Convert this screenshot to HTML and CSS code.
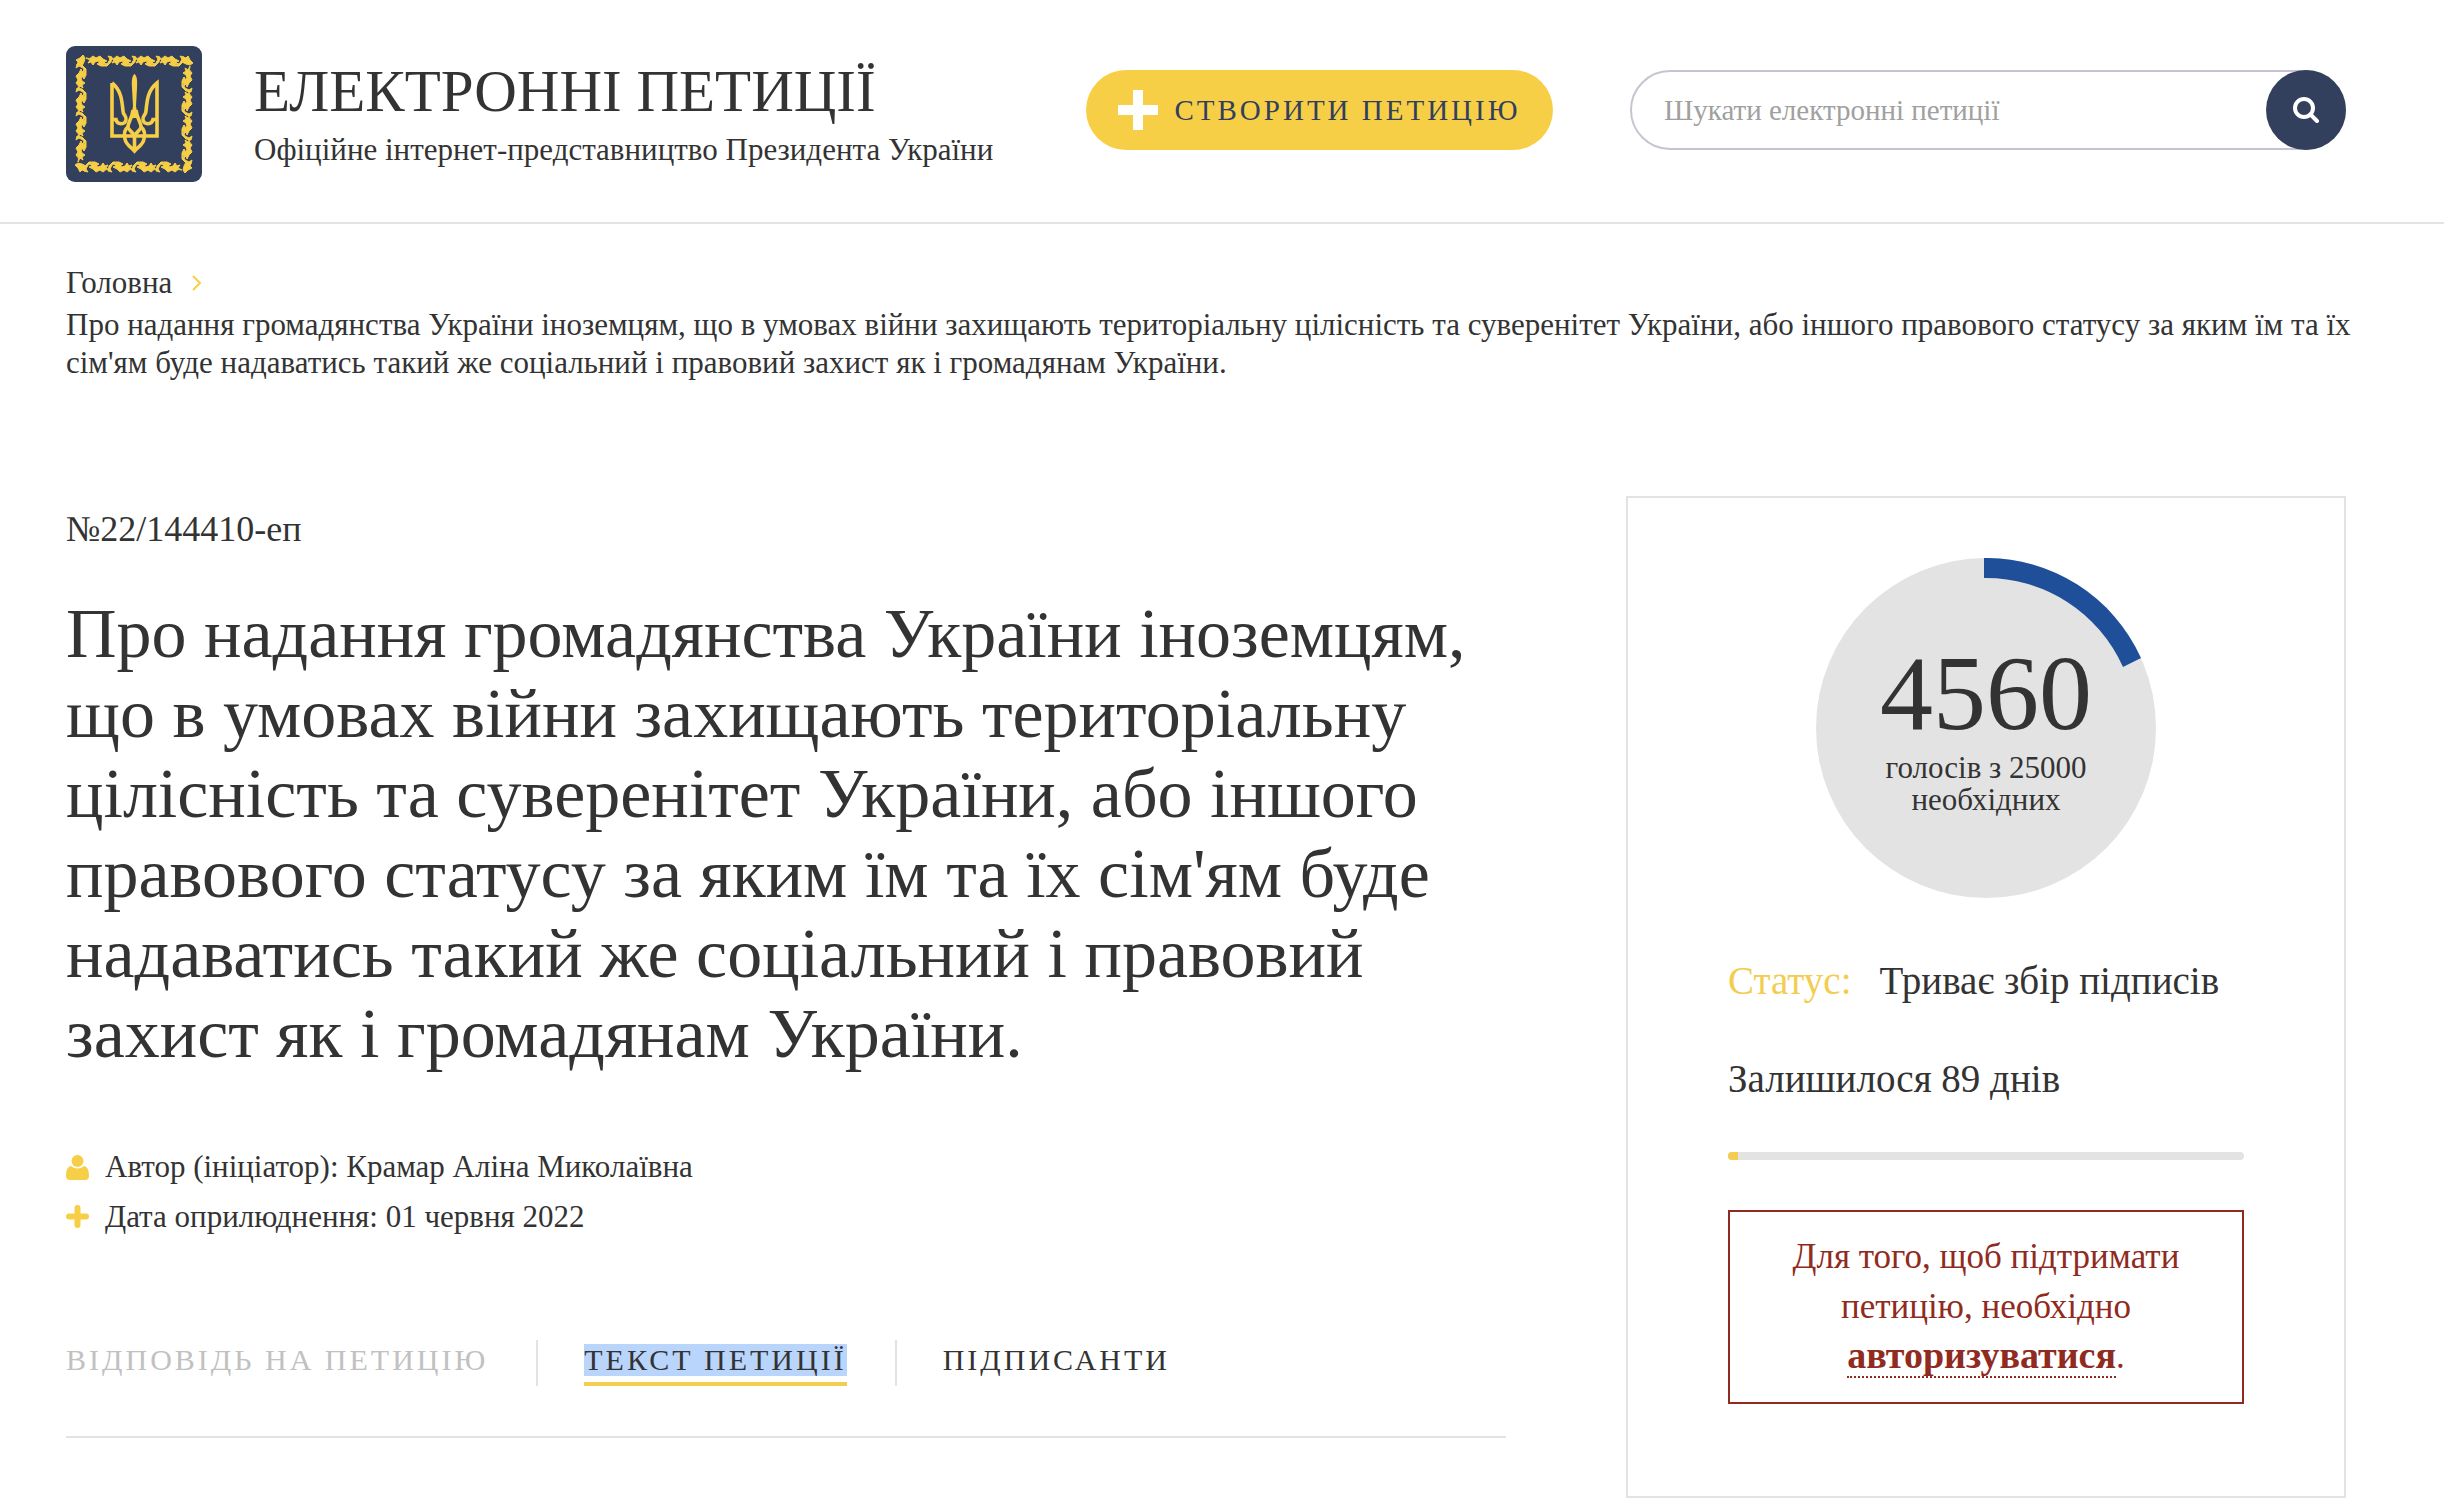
FILE: index.html
```html
<!DOCTYPE html>
<html lang="uk">
<head>
<meta charset="utf-8">
<title>Електронні петиції</title>
<link rel="stylesheet" href="styles.css">
</head>
<body>
<header class="site-header">
  <a class="brand" href="#">
    <svg class="brand-logo" viewBox="0 0 136 136" aria-hidden="true">
      <defs>
        <g id="leaf">
          <path d="M0 3 Q4 5 7 1 L10 3 L14 1 L17 4 L21 6 L18 7 L20 9 L15 8 L12 6 L9 7 L7 10 L5 7 L2 8 L4 5 Z"/>
          <path d="M11 9 L14 7 L18 10 L22 8 L24 4 L22 1 L26 2 L25 7 L21 11 L15 11 Z"/>
        </g>
        <g id="garland">
          <use href="#leaf" x="10"/><use href="#leaf" x="34"/><use href="#leaf" x="58"/><use href="#leaf" x="82"/>
          <path d="M0 5 L4 3 L7 0 L9 3 L8 7 L6 11 L1 10 L2 7 Z"/>
        </g>
      </defs>
      <rect width="136" height="136" rx="9" fill="#323f5d"/>
      <g fill="#f7cf47" stroke="#f7cf47" stroke-width="1">
        <use href="#garland" transform="translate(10 9)"/>
        <use href="#garland" transform="translate(127 10) rotate(90)"/>
        <use href="#garland" transform="translate(126 127) rotate(180)"/>
        <use href="#garland" transform="translate(9 126) rotate(270)"/>
      </g>
      <g fill="none" stroke="#f7cf47" stroke-width="3.6">
        <path d="M46 37V90H91V37C82 44 81 54 80 65C80 69 76 70 77 74C78 79 86 79 87 73.500H91M46 37C55 44 56 54 57 65C57 69 61 70 60 74C59 79 51 79 50 73.500H46"/>
        <path d="M67 64C66 73 62 76 62 81C62 84 66 85 68.500 90C71 85 75 84 75 81C75 76 71 73 70 64"/>
        <path d="M62 81C58 84 58 89 59 93C60 99 65 101 68.500 105C72 101 77 99 78 93C79 89 79 84 75 81M68.500 88V104"/>
      </g>
      <path d="M68.500 28C66 30 65.500 34 66 42L67 60L65 72H72L70 60L71 42C71.500 34 71 30 68.500 28Z" fill="#f7cf47"/>
    </svg>
    <span class="brand-text">
      <span class="brand-title">ЕЛЕКТРОННІ ПЕТИЦІЇ</span>
      <span class="brand-subtitle">Офіційне інтернет-представництво Президента України</span>
    </span>
  </a>
  <button class="create-button" type="button">
    <svg class="create-icon" viewBox="0 0 40 40" aria-hidden="true"><path d="M15 0h10v15h15v10H25v15H15V25H0V15h15z" fill="#fff"/></svg>
    СТВОРИТИ ПЕТИЦІЮ
  </button>
  <form class="search" role="search">
    <input class="search-input" type="text" placeholder="Шукати електронні петиції" aria-label="Шукати електронні петиції">
    <button class="search-button" type="button" aria-label="Шукати">
      <svg class="search-icon" viewBox="0 0 26 26" aria-hidden="true"><circle cx="11" cy="11" r="9" fill="none" stroke="#fff" stroke-width="4"/><path d="M17.500 17.500L24 24" stroke="#fff" stroke-width="4" stroke-linecap="round"/></svg>
    </button>
  </form>
</header>
<nav class="breadcrumbs" aria-label="Навігація">
  <div class="crumb-home">
    <a href="#">Головна</a>
    <svg class="crumb-arrow" viewBox="0 0 10 16" aria-hidden="true"><path d="M1 1l7 7-7 7" fill="none" stroke="#f7cf47" stroke-width="2"/></svg>
  </div>
  <p class="crumb-current">Про надання громадянства України іноземцям, що в умовах війни захищають територіальну цілісність та суверенітет України, або іншого правового статусу за яким їм та їх сім'ям буде надаватись такий же соціальний і правовий захист як і громадянам України.</p>
</nav>
<main class="petition">
  <article class="petition-main">
    <p class="petition-number">№22/144410-еп</p>
    <h1 class="petition-title">Про надання громадянства України іноземцям, що в умовах війни захищають територіальну цілісність та суверенітет України, або іншого правового статусу за яким їм та їх сім'ям буде надаватись такий же соціальний і правовий захист як і громадянам України.</h1>
    <ul class="meta">
      <li class="meta-item">
        <svg class="meta-icon" viewBox="0 0 23 25" aria-hidden="true"><circle cx="11.500" cy="6" r="6" fill="#f7cf47"/><path d="M5 11C1 12 0 16 0 21Q0 25 4 25H19Q23 25 23 21C23 16 22 12 18 11Q11.500 16 5 11Z" fill="#f7cf47"/></svg>
        Автор (ініціатор): Крамар Аліна Миколаївна
      </li>
      <li class="meta-item">
        <svg class="meta-icon" viewBox="0 0 23 25" aria-hidden="true"><path d="M11.500 3v17M3 11.500h17" stroke="#f7cf47" stroke-width="6" stroke-linecap="round"/></svg>
        Дата оприлюднення: 01 червня 2022
      </li>
    </ul>
    <div class="tabs">
      <div class="tab"><span class="tab-label tab-disabled">ВІДПОВІДЬ НА ПЕТИЦІЮ</span></div>
      <div class="tab"><a class="tab-label tab-active" href="#"><span class="tab-selection">ТЕКСТ ПЕТИЦІЇ</span></a></div>
      <div class="tab"><a class="tab-label" href="#">ПІДПИСАНТИ</a></div>
    </div>
  </article>
  <aside class="card">
    <div class="votes">
      <svg class="votes-ring" viewBox="0 0 340 340" aria-hidden="true"><circle cx="170" cy="170" r="170" fill="#e3e3e3"/><path d="M168 0A170 170 0 0 1 325 100L307 109A150 150 0 0 0 168 20Z" fill="#1f4f99"/></svg>
      <div class="votes-text">
        <strong class="votes-count">4560</strong>
        <span class="votes-label">голосів з 25000 необхідних</span>
      </div>
    </div>
    <p class="status"><span class="status-name">Статус:</span><span>Триває збір підписів</span></p>
    <p class="days-left">Залишилося 89 днів</p>
    <div class="progress" role="progressbar" aria-label="Минуло днів" aria-valuemin="0" aria-valuemax="100" aria-valuenow="2"><div class="progress-fill" style="width: 2%"></div></div>
    <p class="notice">Для того, щоб підтримати петицію, необхідно <a class="notice-link" href="#">авторизуватися</a>.</p>
  </aside>
</main>
</body>
</html>
```
FILE: styles.css
```css
* { box-sizing: border-box; }
body {
  margin: 0;
  background: #fff;
  color: #333;
  font-family: "Liberation Serif", serif;
  font-size: 31px;
  line-height: 38px;
}
a { color: inherit; text-decoration: none; }
p, h1, ul { margin: 0; padding: 0; font-weight: normal; }
button, input { font: inherit; }

.site-header {
  display: flex;
  align-items: flex-start;
  padding: 46px 98px 40px 66px;
  border-bottom: 2px solid #e3e3e3;
}
.brand { display: flex; align-items: center; gap: 52px; white-space: nowrap; width: 1020px; flex: none; }
.brand-logo { width: 136px; height: 136px; flex: none; }
.brand-text { display: flex; flex-direction: column; gap: 8px; }
.brand-title { font-size: 59px; line-height: 64px; }
.create-button {
  display: flex;
  align-items: center;
  justify-content: center;
  gap: 16px;
  width: 467px;
  height: 80px;
  flex: none;
  margin: 24px 77px 0 0;
  padding: 0;
  border: 0;
  border-radius: 40px;
  background: #f7cf47;
  color: #323f5d;
  font-size: 29px;
  letter-spacing: 3px;
  white-space: nowrap;
}
.create-icon { width: 40px; height: 40px; }
.search { display: flex; flex: 1; height: 80px; margin-top: 24px; position: relative; }
.search-input {
  width: 100%;
  padding: 0 100px 0 32px;
  border: 2px solid #c5c5d2;
  border-radius: 40px;
  background: #fff;
  color: #333;
  font-size: 29px;
}
.search-input::placeholder { color: #a0a0a0; opacity: 1; }
.search-button {
  position: absolute;
  top: 0;
  right: 0;
  display: grid;
  place-items: center;
  width: 80px;
  height: 80px;
  padding: 0;
  border: 0;
  border-radius: 50%;
  background: #323f5d;
}
.search-icon { width: 26px; height: 26px; }

.breadcrumbs { padding: 40px 86px 0 66px; }
.crumb-home { display: flex; align-items: center; gap: 20px; margin-bottom: 4px; }
.crumb-arrow { width: 10px; height: 16px; }

.petition {
  display: grid;
  grid-template-columns: 1fr 720px;
  gap: 120px;
  align-items: start;
  padding: 114px 98px 6px 66px;
}
.petition-number { padding-top: 14px; font-size: 36px; }
.petition-title { margin-top: 46px; font-size: 70px; line-height: 80px; }
.meta { margin-top: 68px; list-style: none; }
.meta-item { display: flex; align-items: center; gap: 16px; line-height: 50px; }
.meta-icon { width: 23px; height: 25px; }
.tabs { display: flex; margin-top: 98px; padding-bottom: 50px; border-bottom: 2px solid #e3e3e3; font-size: 30px; letter-spacing: 3px; }
.tab { display: flex; height: 46px; padding-right: 48px; margin-right: 46px; border-right: 2px solid #e3e3e3; }
.tab:last-child { border-right: 0; }
.tab-label { padding-top: 4px; line-height: 32px; }
.tab-disabled { color: #c1c1c1; }
.tab-active { border-bottom: 4px solid #f2cd50; }
.tab-selection { display: block; background: #b9d5fb; }

.card { padding: 60px 100px 92px; border: 2px solid #e3e3e3; }
.votes { display: grid; width: 340px; margin: 0 auto; }
.votes-ring, .votes-text { grid-area: 1 / 1; }
.votes-ring { width: 340px; height: 340px; display: block; }
.votes-text { display: flex; flex-direction: column; align-items: center; padding-top: 78px; text-align: center; }
.votes-count { font-size: 106px; line-height: 116px; font-weight: normal; }
.votes-label { width: 220px; line-height: 32px; }
.status { display: flex; gap: 28px; margin-top: 62px; font-size: 39px; line-height: 42px; white-space: nowrap; }
.status-name { color: #f2cd50; }
.days-left { margin-top: 56px; font-size: 39px; line-height: 42px; }
.progress { height: 8px; margin-top: 52px; border-radius: 4px; background: #e3e3e3; overflow: hidden; }
.progress-fill { height: 100%; background: #f2cd50; }
.notice { margin-top: 50px; padding: 20px 48px; border: 2px solid #8f2b20; color: #8f2b20; font-size: 35px; line-height: 50px; text-align: center; }
.notice-link { border-bottom: 2px dotted #8f2b20; font-size: 38px; line-height: 1; font-weight: bold; }
```
